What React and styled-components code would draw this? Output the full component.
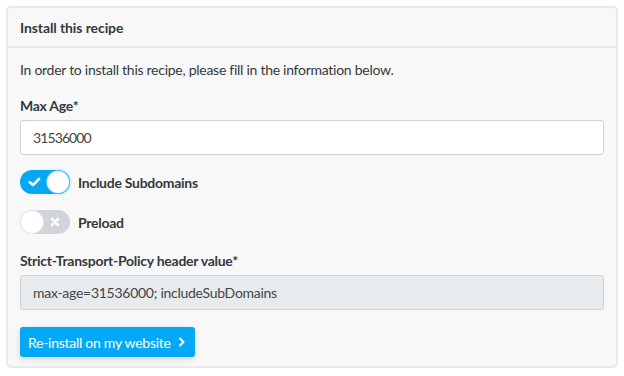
import React, { useState } from "react";
import styled, { createGlobalStyle } from "styled-components";

const GlobalStyle = createGlobalStyle`
  body {
    margin: 0;
    background: #fff;
    font-family: "Lato", "Noto Sans", sans-serif;
    letter-spacing: -0.27px;
    color: #333a40;
  }
`;

const Page = styled.div`
  padding: 6px;
`;

const Card = styled.div`
  width: 612px;
  box-sizing: border-box;
  background: #f8f8f8;
  border: 2px solid #e7eaed;
  border-radius: 5px;
`;

const Header = styled.div`
  height: 38px;
  display: flex;
  align-items: center;
  padding: 0 12px;
  border-bottom: 2px solid #e7eaed;
  font-size: 14px;
  font-weight: 700;
  letter-spacing: -0.1px;
`;

const Body = styled.div`
  padding: 12px 12px 9px;
  display: flex;
  flex-direction: column;
`;

const Intro = styled.p`
  margin: 0 0 16px;
  font-size: 14px;
  line-height: 20px;
`;

const Label = styled.label`
  font-size: 14px;
  font-weight: 700;
  line-height: 20px;
  margin-top: ${(p) => p.$mt || 0}px;
  margin-bottom: 4px;
`;

const Input = styled.input`
  box-sizing: border-box;
  width: 584px;
  height: 35px;
  padding: 0 12px;
  border: 1px solid #ced3da;
  border-radius: 3px;
  background: ${(p) => (p.readOnly ? "#e8ebee" : "#fff")};
  color: #444;
  font-family: "Lato", sans-serif;
  letter-spacing: ${(p) => (p.readOnly ? "-0.27px" : "-0.9px")};
  font-size: 14px;
  outline: none;
`;

const ToggleRow = styled.label`
  display: flex;
  align-items: center;
  gap: 8px;
  font-size: 14px;
  font-weight: 700;
  margin-top: ${(p) => p.$mt}px;
  cursor: pointer;
`;

const Track = styled.span`
  position: relative;
  width: 50px;
  height: 24px;
  border-radius: 12px;
  background: ${(p) => (p.$on ? "#03a9f4" : "#d1d5db")};
  flex-shrink: 0;
`;

const Knob = styled.span`
  position: absolute;
  top: 1px;
  left: ${(p) => (p.$on ? "27px" : "1px")};
  width: 22px;
  height: 22px;
  border-radius: 50%;
  background: #fff;
  box-shadow: ${(p) => (p.$on ? "0 0 0 1px #4fc3f7, 0 0 3px 1px rgba(3,169,244,0.4)" : "0 0 0 1px #e3e6ea")};
`;

const Mark = styled.svg`
  position: absolute;
  top: 7px;
  left: ${(p) => (p.$on ? "8px" : "30px")};
`;

const Toggle = ({ on, onClick, children, mt }) => (
  <ToggleRow $mt={mt} onClick={onClick}>
    <Track $on={on}>
      {on ? (
        <Mark $on width="13" height="10" viewBox="0 0 13 10">
          <path d="M1.8 5.2 L5 8 L11 2" stroke="#fff" strokeWidth="2.6" fill="none" strokeLinecap="round" strokeLinejoin="round" />
        </Mark>
      ) : (
        <Mark width="10" height="10" viewBox="0 0 10 10">
          <path d="M2 2 L8 8 M8 2 L2 8" stroke="#fff" strokeWidth="2.6" strokeLinecap="round" />
        </Mark>
      )}
      <Knob $on={on} />
    </Track>
    {children}
  </ToggleRow>
);

const Button = styled.button`
  align-self: flex-start;
  margin-top: 17px;
  height: 30px;
  padding: 0 9px 0 8px;
  display: flex;
  align-items: center;
  gap: 7px;
  border: none;
  border-radius: 3px;
  background: #03a9f4;
  color: #fff;
  font-family: "Lato", sans-serif;
  letter-spacing: -0.27px;
  font-size: 14px;
  box-shadow: 0 2px 6px rgba(0, 0, 0, 0.15);
  cursor: pointer;
`;

export default function App() {
  const [sub, setSub] = useState(true);
  const [pre, setPre] = useState(false);
  return (
    <Page>
      <GlobalStyle />
      <Card>
        <Header>Install this recipe</Header>
        <Body>
          <Intro>In order to install this recipe, please fill in the information below.</Intro>
          <Label>Max Age*</Label>
          <Input defaultValue="31536000" />
          <Toggle mt={15} on={sub} onClick={() => setSub(!sub)}>Include Subdomains</Toggle>
          <Toggle mt={16} on={pre} onClick={() => setPre(!pre)}>Preload</Toggle>
          <Label $mt={17}>Strict-Transport-Policy header value*</Label>
          <Input readOnly value={`max-age=31536000;${sub ? " includeSubDomains" : ""}${pre ? " preload" : ""}`} />
          <Button>
            Re-install on my website
            <svg width="8" height="10" viewBox="0 0 8 10">
              <path d="M2 1.5 L5.5 5 L2 8.5" stroke="#fff" strokeWidth="2" fill="none" strokeLinecap="round" strokeLinejoin="round" />
            </svg>
          </Button>
        </Body>
      </Card>
    </Page>
  );
}
